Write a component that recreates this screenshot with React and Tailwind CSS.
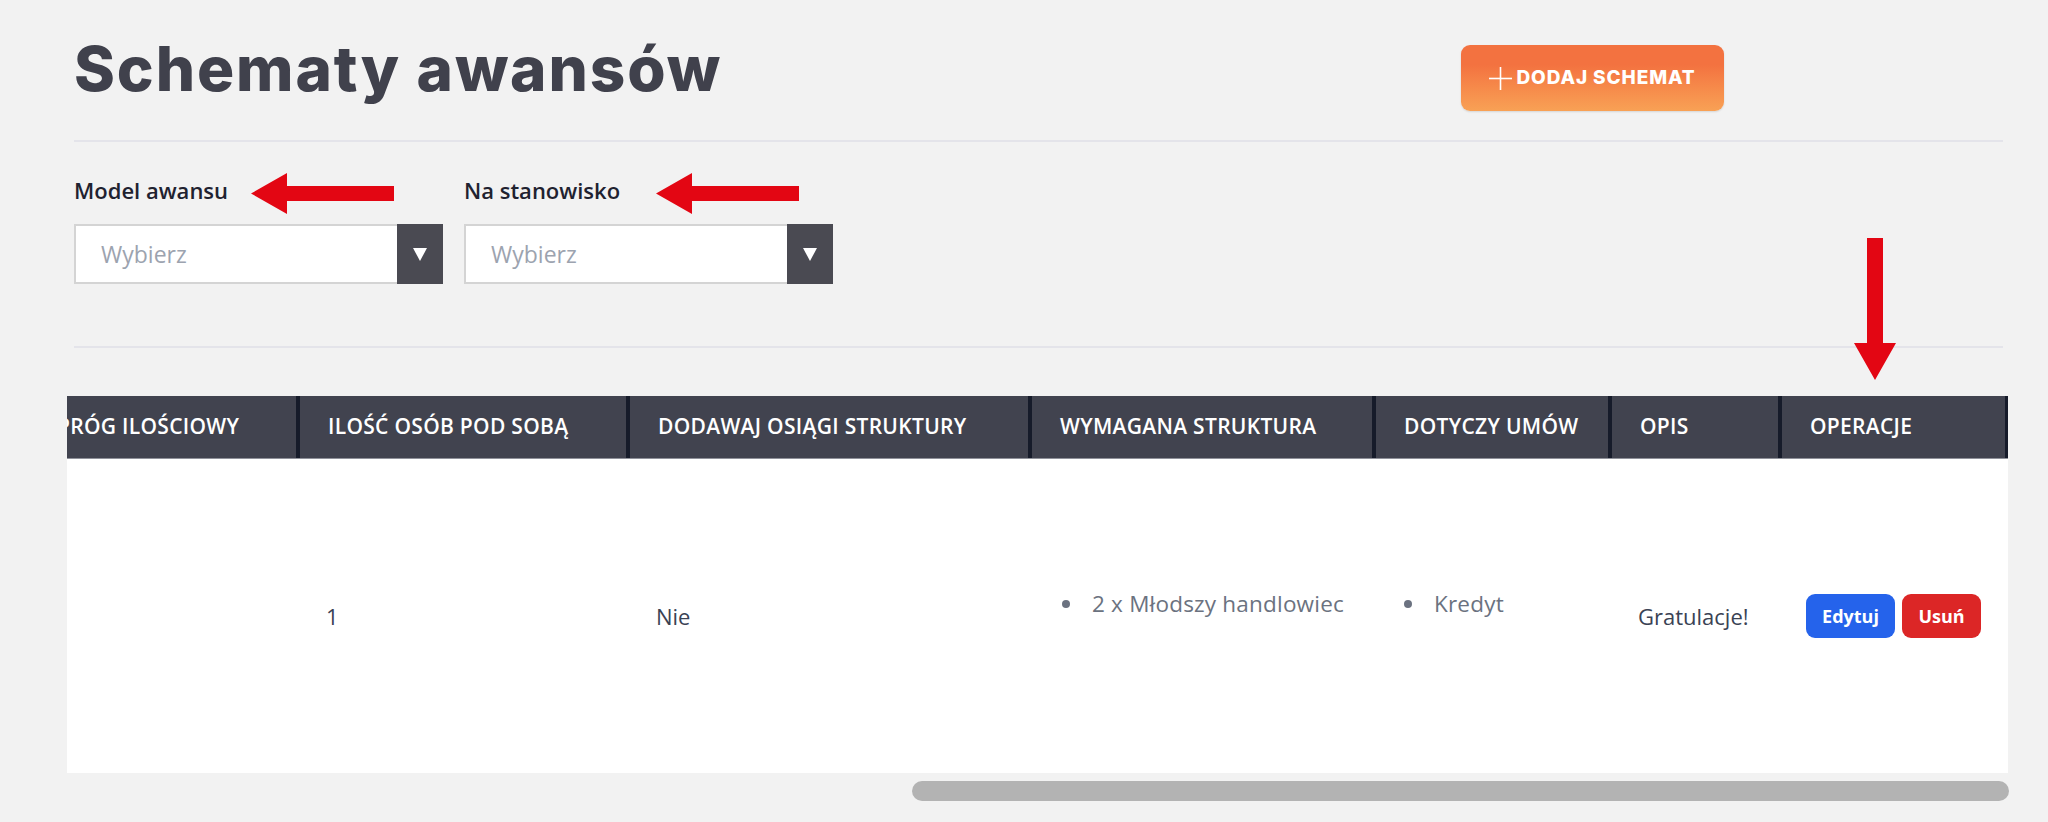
export default function App() {
  const heads = [
    "PRÓG ILOŚCIOWY",
    "ILOŚĆ OSÓB POD SOBĄ",
    "DODAWAJ OSIĄGI STRUKTURY",
    "WYMAGANA STRUKTURA",
    "DOTYCZY UMÓW",
    "OPIS",
    "OPERACJE",
  ];
  const Select = () => (
    <div className="flex h-[60px] w-[369px] border-2 border-[#d4d4d4] bg-white">
      <div className="flex flex-1 items-center pl-[25px] text-[23px] text-[#9ca3af]">Wybierz</div>
      <div className="flex w-[46px] items-center justify-center bg-[#4a4a52] -my-[2px] -mr-[2px]">
        <svg width="14" height="13" viewBox="0 0 14 13"><path d="M0 0 L14 0 L7 13 Z" fill="#ffffff" /></svg>
      </div>
    </div>
  );
  return (
    <div
      className="relative h-[822px] w-[2048px] overflow-hidden bg-[#f2f2f2]"
      style={{ fontFamily: '"Open Sans", "Liberation Sans", sans-serif' }}
    >
      <div className="pl-[74px] pr-[45px]">
        <div className="flex items-start pt-[45px]">
          <h1
            className="mt-[-7px] w-[1387px] text-[62px] font-extrabold leading-none tracking-[1.9px] text-[#40414c]"
            style={{ fontFamily: 'Inter, "Liberation Sans", sans-serif' }}
          >
            Schematy awansów
          </h1>
          <button
            className="flex h-[66px] w-[263px] items-center justify-center gap-[4px] rounded-[9px] bg-gradient-to-b from-[#f37240] from-30% to-[#f8a155] text-[19px] font-extrabold tracking-[0.9px] text-white shadow-[0_1px_2px_rgba(0,0,0,0.12)]"
            style={{ fontFamily: 'Inter, "Liberation Sans", sans-serif' }}
          >
            <svg width="23" height="23" viewBox="0 0 23 23" stroke="#fff" strokeWidth="1.6">
              <line x1="11.5" y1="0" x2="11.5" y2="23" />
              <line x1="0" y1="11.5" x2="23" y2="11.5" />
            </svg>
            DODAJ SCHEMAT
          </button>
        </div>
        <div className="mt-[29px] h-[2px] bg-[#e4e4ea]" />
        <div className="mt-[33px] flex gap-[21px]">
          <div>
            <div className="text-[22px] font-semibold leading-[30px] text-[#1f2230]">Model awansu</div>
            <div className="mt-[19px]"><Select /></div>
          </div>
          <div>
            <div className="text-[22px] font-semibold leading-[30px] text-[#1f2230]">Na stanowisko</div>
            <div className="mt-[19px]"><Select /></div>
          </div>
        </div>
        <div className="mt-[62px] h-[2px] bg-[#e4e4ea]" />
      </div>

      <div className="ml-[67px] mt-[48px] w-[1941px]">
        <div className="overflow-hidden">
          <div className="ml-[-38px] w-[1980px]">
            <div className="grid h-[63px] grid-cols-[271px_330px_402px_344px_236px_170px_227px] bg-[#41434f] border-b border-[#8f919a]">
              {heads.map((h) => (
                <div
                  key={h}
                  className="flex items-center whitespace-nowrap border-r-[4px] border-[#161b2a] pl-[28px] text-[21px] font-semibold tracking-[0.3px] text-white"
                >
                  {h}
                </div>
              ))}
            </div>
            <div className="grid h-[314px] grid-cols-[271px_330px_402px_344px_236px_170px_227px] bg-white text-[22px] text-[#3a4254]">
              <div />
              <div className="flex items-center pl-[26px]">1</div>
              <div className="flex items-center pl-[26px]">Nie</div>
              <div className="flex items-center pl-[30px]">
                <ul className="mb-[24px] text-[22.5px] tracking-[0.2px] text-[#6b7280]">
                  <li className="flex items-center gap-[22px]">
                    <span className="h-[8px] w-[8px] rounded-full bg-[#6b7280]" />2 x Młodszy handlowiec
                  </li>
                </ul>
              </div>
              <div className="flex items-center pl-[28px]">
                <ul className="mb-[24px] text-[22.5px] tracking-[0.2px] text-[#6b7280]">
                  <li className="flex items-center gap-[22px]">
                    <span className="h-[8px] w-[8px] rounded-full bg-[#6b7280]" />Kredyt
                  </li>
                </ul>
              </div>
              <div className="flex items-center pl-[26px]">Gratulacje!</div>
              <div className="flex items-center gap-[7px] pl-[24px]">
                <button className="h-[44px] w-[89px] rounded-[9px] bg-[#2563eb] text-[18px] font-bold text-white">Edytuj</button>
                <button className="h-[44px] w-[79px] rounded-[9px] bg-[#dc2626] text-[18px] font-bold text-white">Usuń</button>
              </div>
            </div>
          </div>
        </div>
        <div className="mt-[8px] h-[20px] pl-[845px]">
          <div className="h-[20px] w-[1097px] rounded-full bg-[#b3b3b3]" />
        </div>
      </div>

      <svg className="absolute left-[251px] top-[173px]" width="143" height="41" viewBox="0 0 143 41">
        <path d="M0 20.5 L36 0 L36 13 L143 13 L143 28 L36 28 L36 41 Z" fill="#e30613" />
      </svg>
      <svg className="absolute left-[656px] top-[173px]" width="143" height="41" viewBox="0 0 143 41">
        <path d="M0 20.5 L36 0 L36 13 L143 13 L143 28 L36 28 L36 41 Z" fill="#e30613" />
      </svg>
      <svg className="absolute left-[1854px] top-[238px]" width="42" height="142" viewBox="0 0 42 142">
        <path d="M13 0 L29 0 L29 105 L42 105 L21 142 L0 105 L13 105 Z" fill="#e30613" />
      </svg>
    </div>
  );
}
